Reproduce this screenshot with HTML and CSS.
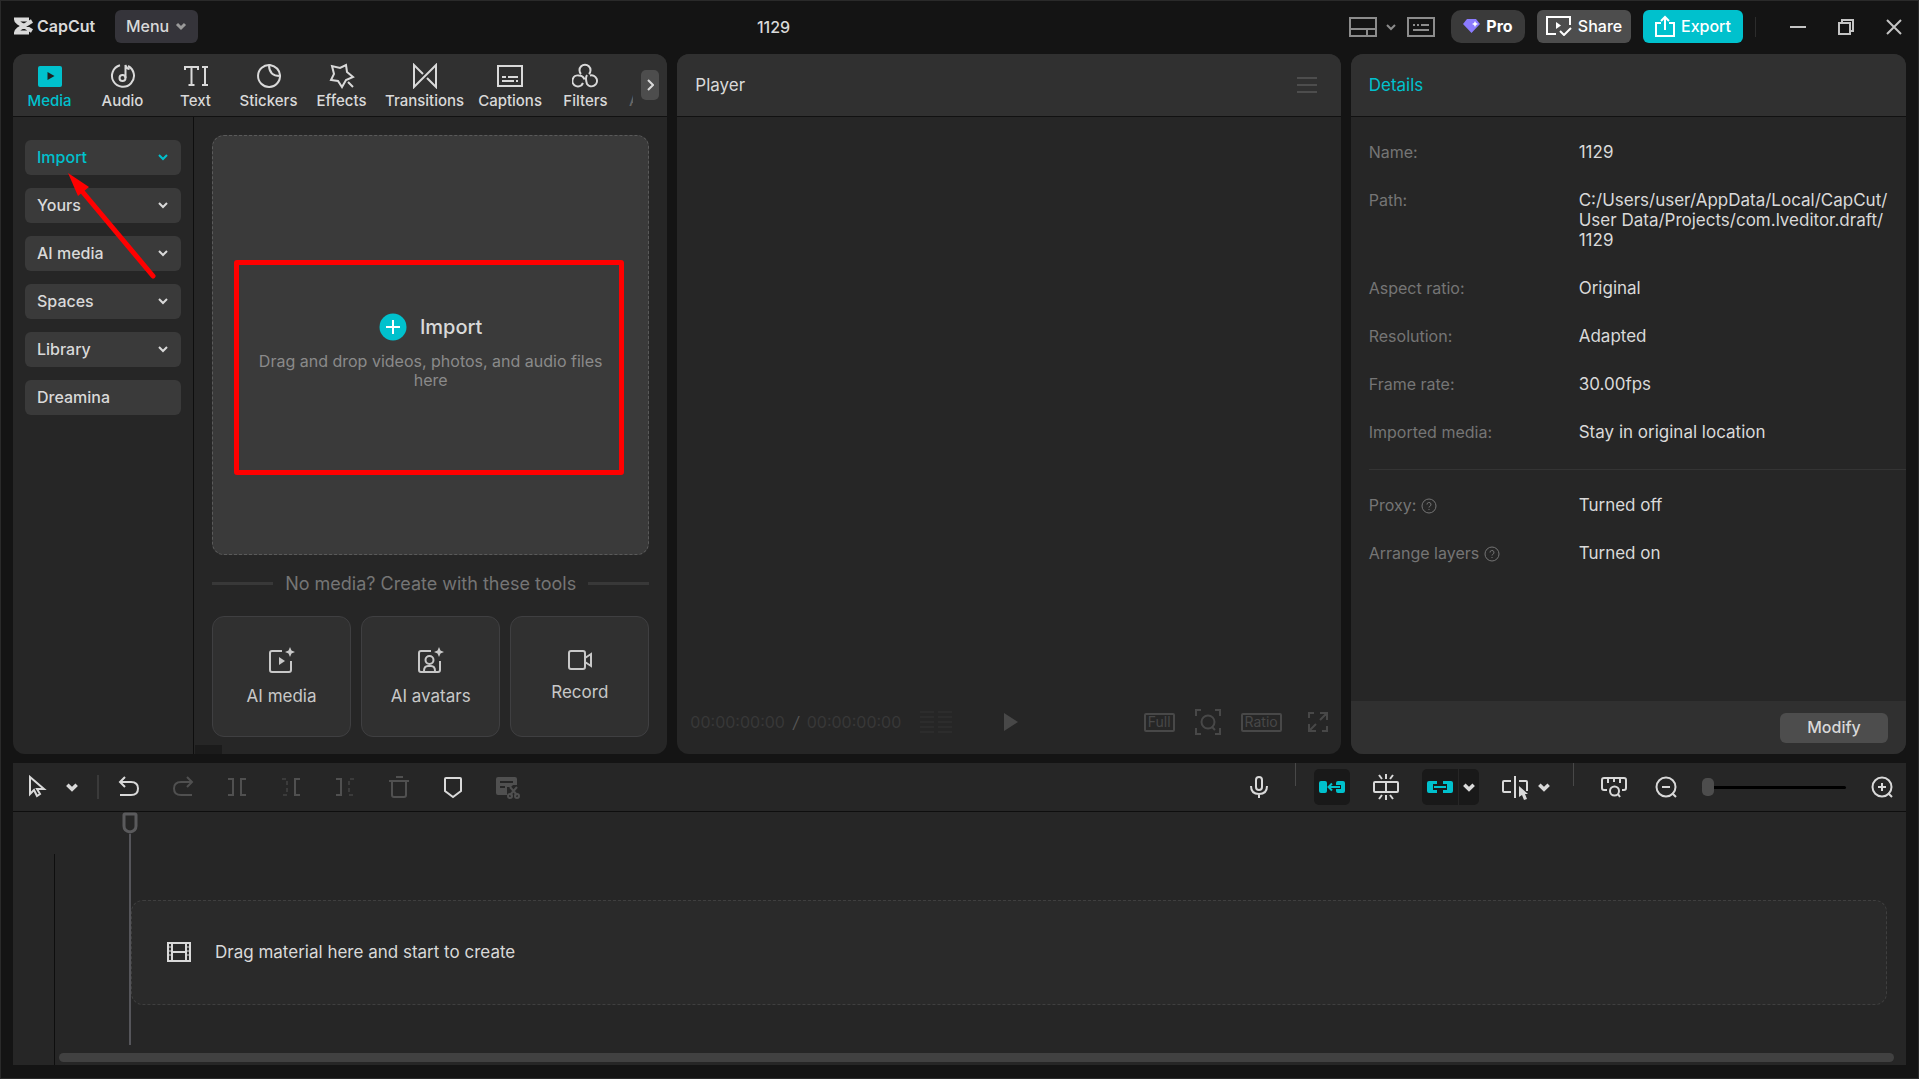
FILE: index.html
```html
<!DOCTYPE html>
<html lang="en">
<head>
  <meta charset="utf-8">
  <title>CapCut - 1129</title>
  <link rel="stylesheet" href="styles.css">
</head>
<body>
  <!-- shared icons -->
  <svg class="defs">
    <symbol id="chevron" viewBox="0 0 12 12"><path d="M2 4l4 4 4-4"/></symbol>
    <symbol id="help" viewBox="0 0 16 16"><circle cx="8" cy="8" r="7"/><path d="M6 6.500a2 2 0 1 1 2.800 1.800q-.8.4-.8 1.200M8 11v1"/></symbol>
  </svg>

  <header class="topbar">
    <div class="brand">
      <svg class="logo" width="20" height="18" viewBox="0 0 20 18"><path d="M19 4L5 12.500Q3 14 3 15.500h11v-2M19 14L5 5.500Q3 4 3 2.500h11v2" /></svg>
      <span>CapCut</span>
    </div>
    <button class="btn menu-btn" type="button">Menu <svg class="icon bold" width="12" height="12"><use href="#chevron"/></svg></button>
    <h1 class="project-title">1129</h1>
    <div class="top-actions">
      <button class="plain layout-btn" type="button" aria-label="Layout">
        <svg class="icon" width="28" height="20" viewBox="0 0 28 20"><path d="M1 1h26v18H1zM1 12h26M18 12v7"/></svg>
        <svg class="icon" width="12" height="12"><use href="#chevron"/></svg>
      </button>
      <button class="plain" type="button" aria-label="Shortcuts">
        <svg class="icon" width="28" height="20" viewBox="0 0 28 20"><path d="M1 1h26v18H1zM6 8h2M10 8h2M14 8h8M6 13h16"/></svg>
      </button>
      <button class="btn pro-btn" type="button">
        <svg width="17" height="14" viewBox="0 0 17 14"><path d="M4 0h9l4 5-8.500 9L0 5z" fill="#8b7bff"/><path d="M12 2l1 2 2 1-2 1-1 2-1-2-2-1 2-1z" fill="#fff"/></svg>
        Pro
      </button>
      <button class="btn share-btn" type="button">
        <svg class="icon" width="26" height="20" viewBox="0 0 26 20"><path d="M10 18H1V1h23v8M14 15l4 4 7-7"/><path class="fill" d="M10 6v7l5-3.500z"/></svg>
        Share
      </button>
      <button class="btn export-btn" type="button">
        <svg class="icon" width="20" height="22" viewBox="0 0 20 22"><path d="M6 8H1v13h18V8h-5M10 15V2M6 6l4-4 4 4"/></svg>
        Export
      </button>
      <div class="window-controls">
        <button class="plain" type="button" aria-label="Minimize"><svg class="icon" width="16" height="16" viewBox="0 0 16 16"><path d="M0 8h16"/></svg></button>
        <button class="plain" type="button" aria-label="Restore"><svg class="icon" width="16" height="16" viewBox="0 0 16 16"><path d="M1 4h11v11H1zM4 4V1h11v11h-3"/></svg></button>
        <button class="plain" type="button" aria-label="Close"><svg class="icon" width="16" height="16" viewBox="0 0 16 16"><path d="M1 1l14 14M15 1L1 15"/></svg></button>
      </div>
    </div>
  </header>

  <main class="workspace">
    <section class="panel media-panel">
      <div class="panel-head tabs-head">
        <nav class="tabs">
          <a class="tab active" href="#media"><svg width="26" height="26" viewBox="0 0 26 26"><path d="M1 5q0-2 2-2h20q2 0 2 2v17q0 2-2 2H3q-2 0-2-2z" fill="#00c1cd"/><path d="M10.500 9v8l7-4z" fill="#202020"/></svg>Media</a>
          <a class="tab" href="#audio"><svg class="icon" width="26" height="26" viewBox="0 0 26 26"><path d="M10 2.200A11 11 0 1 0 18 3M15.500 15V2q1 4 4 4"/><circle cx="12.500" cy="15" r="3"/></svg>Audio</a>
          <a class="tab" href="#text"><svg class="icon" width="26" height="26" viewBox="0 0 26 26"><path d="M2 7V4h13v3M8.500 4v18M5.500 22h6M19 4h6M19 22h6M22 4v18"/></svg>Text</a>
          <a class="tab" href="#stickers"><svg class="icon" width="26" height="26" viewBox="0 0 26 26"><path d="M14 2A11 11 0 1 0 24 12Q23 4 14 2zM13 2q0 11 11 11"/></svg>Stickers</a>
          <a class="tab" href="#effects"><svg class="icon" width="26" height="26" viewBox="0 0 26 26"><path d="M17 2l1 7 6 5-7 3-4 7-4-6-7-1 3-6-2-8 8 2zM19 19l5 5"/></svg>Effects</a>
          <a class="tab" href="#transitions"><svg class="icon" width="26" height="26" viewBox="0 0 26 26"><path d="M11 11L2 2v22L24 2v22l-9-9"/></svg>Transitions</a>
          <a class="tab" href="#captions"><svg class="icon" width="26" height="26" viewBox="0 0 26 26"><path d="M1 3h24v20H1zM5 14h4M11 14h10M5 18h12M19 18h2"/></svg>Captions</a>
          <a class="tab" href="#filters"><svg class="icon" width="26" height="26" viewBox="0 0 26 26"><path d="M9 11a5.500 5.500 0 1 1 8 0M11 20a5.500 5.500 0 1 1-4-7.500q4 0 5.500 4M15 12q-2 3 0 9a5.500 5.500 0 1 0 3-8.500"/></svg>Filters</a>
          <a class="tab faded" href="#adjustment"><svg width="26" height="26"></svg>Adjustment</a>
        </nav>
        <button class="tabs-next" type="button" aria-label="More tabs"><svg class="icon" width="8" height="12" viewBox="0 0 8 12"><path d="M2 1l5 5-5 5"/></svg></button>
      </div>

      <div class="media-body">
        <div class="side-menu">
          <button class="side-item active" type="button">Import <svg class="icon" width="12" height="12"><use href="#chevron"/></svg></button>
          <button class="side-item" type="button">Yours <svg class="icon" width="12" height="12"><use href="#chevron"/></svg></button>
          <button class="side-item" type="button">AI media <svg class="icon" width="12" height="12"><use href="#chevron"/></svg></button>
          <button class="side-item" type="button">Spaces <svg class="icon" width="12" height="12"><use href="#chevron"/></svg></button>
          <button class="side-item" type="button">Library <svg class="icon" width="12" height="12"><use href="#chevron"/></svg></button>
          <button class="side-item" type="button">Dreamina</button>
          <!-- arrow lies over the menu -->
          <svg class="pointer" width="92" height="110" viewBox="0 0 92 110"><path d="M14 17L86 103" stroke="#f00" stroke-width="5" stroke-linecap="round"/><path d="M1 0l21 14-11 9z" fill="#f00"/></svg>
        </div>

        <div class="media-content">
          <div class="drop-area">
            <button class="import-btn" type="button">
              <svg width="28" height="28" viewBox="0 0 28 28"><circle cx="14" cy="14" r="13.500" fill="#00c1cd"/><path d="M7 14h14M14 7v14" stroke="#fff" stroke-width="2"/></svg>
              Import
            </button>
            <p>Drag and drop videos, photos, and audio files here</p>
            <div class="highlight"></div>
          </div>
          <div class="tools-title"><span>No media? Create with these tools</span></div>
          <div class="tools">
            <button class="tool-card" type="button">
              <svg class="icon" width="28" height="28" viewBox="0 0 28 28"><path d="M14 5H4q-2 0-2 2v17q0 2 2 2h17q2 0 2-2V15"/><path class="fill" d="M11 11v8l6-4zM22 1l1.500 3.500L27 6l-3.500 1.500L22 11l-1.500-3.500L17 6l3.500-1.500z"/></svg>
              AI media
            </button>
            <button class="tool-card" type="button">
              <svg class="icon" width="28" height="28" viewBox="0 0 28 28"><path d="M14 5H4q-2 0-2 2v17q0 2 2 2h17q2 0 2-2V15M7 25q0-5 4-5h3q4 0 4 5"/><circle cx="12.500" cy="14" r="4"/><path class="fill" d="M22 1l1.500 3.500L27 6l-3.500 1.500L22 11l-1.500-3.500L17 6l3.500-1.500z"/></svg>
              AI avatars
            </button>
            <button class="tool-card" type="button">
              <svg class="icon" width="26" height="20" viewBox="0 0 26 20"><path d="M4 1h12q2 0 2 2v14q0 2-2 2H4q-2 0-2-2V3q0-2 2-2zM18 8l6-4v12l-6-4"/></svg>
              Record
            </button>
          </div>
          <div class="scroll-corner"></div>
        </div>
      </div>
    </section>

    <section class="panel player-panel">
      <div class="panel-head">
        <h2>Player</h2>
        <button class="plain player-menu" type="button" aria-label="Player menu"><svg class="icon" width="20" height="16" viewBox="0 0 20 16"><path d="M0 1h20M0 8h20M0 15h20"/></svg></button>
      </div>
      <div class="player-view"></div>
      <div class="player-controls">
        <div class="timecode"><span>00:00:00:00</span><i>/</i><span>00:00:00:00</span></div>
        <svg class="icon levels" width="34" height="24" viewBox="0 0 34 24"><path d="M1 2h14M1 7h14M1 12h14M1 17h14M1 22h14M19 2h14M19 7h14M19 12h14M19 17h14M19 22h14"/></svg>
        <button class="plain play-btn" type="button" aria-label="Play"><svg width="16" height="18" viewBox="0 0 16 18"><path d="M1 0v18l14-9z" fill="currentColor"/></svg></button>
        <div class="view-tools">
          <button class="boxed" type="button">Full</button>
          <button class="plain" type="button" aria-label="Zoom"><svg class="icon" width="26" height="26" viewBox="0 0 26 26"><path d="M1 7V1h5M20 1h5v6M25 19v6h-5M6 25H1v-6M17 18l3 3"/><circle cx="13" cy="13" r="6.500"/></svg></button>
          <button class="boxed" type="button">Ratio</button>
          <button class="plain" type="button" aria-label="Full screen"><svg class="icon" width="20" height="20" viewBox="0 0 20 20"><path d="M1 6V1h5M19 14v5h-5M12 1h7v7M19 1l-7 7M8 19H1v-7M1 19l7-7"/></svg></button>
        </div>
      </div>
    </section>

    <section class="panel details-panel">
      <div class="panel-head"><h2 class="accent">Details</h2></div>
      <dl class="details">
        <div><dt>Name:</dt><dd>1129</dd></div>
        <div><dt>Path:</dt><dd>C:/Users/user/AppData/Local/CapCut/<wbr>User Data/Projects/com.lveditor.draft/<wbr>1129</dd></div>
        <div><dt>Aspect ratio:</dt><dd>Original</dd></div>
        <div><dt>Resolution:</dt><dd>Adapted</dd></div>
        <div><dt>Frame rate:</dt><dd>30.00fps</dd></div>
        <div><dt>Imported media:</dt><dd>Stay in original location</dd></div>
      </dl>
      <dl class="details more">
        <div><dt>Proxy: <svg class="icon" width="16" height="16"><use href="#help"/></svg></dt><dd>Turned off</dd></div>
        <div><dt>Arrange layers <svg class="icon" width="16" height="16"><use href="#help"/></svg></dt><dd>Turned on</dd></div>
      </dl>
      <div class="details-foot"><button class="btn modify-btn" type="button">Modify</button></div>
    </section>
  </main>

  <section class="timeline">
    <div class="toolbar">
      <div class="tool-group select-group">
        <button class="plain" type="button" aria-label="Select"><svg class="icon" width="20" height="24" viewBox="0 0 20 24"><path d="M3 2v17l4-4 3 6 3-2-3-5h7z"/></svg></button>
        <button class="plain" type="button" aria-label="Select options"><svg class="icon bold" width="14" height="14"><use href="#chevron"/></svg></button>
      </div>
      <div class="tool-group edit-group">
        <button class="plain" type="button" aria-label="Undo"><svg class="icon" width="24" height="24" viewBox="0 0 24 24"><path d="M8 2L3 7l5 5M4 7h10q7 0 7 6.500T14 20H3"/></svg></button>
        <button class="plain dim" type="button" aria-label="Redo"><svg class="icon" width="24" height="24" viewBox="0 0 24 24"><path d="M16 2l5 5-5 5M20 7H10q-7 0-7 6.500T10 20h11"/></svg></button>
        <button class="plain dim" type="button" aria-label="Split"><svg class="icon" width="24" height="24" viewBox="0 0 24 24"><path d="M3 4h5v16H3M21 4h-5v16h5"/></svg></button>
        <button class="plain dim" type="button" aria-label="Delete left"><svg class="icon" width="24" height="24" viewBox="0 0 24 24"><path class="ghost" d="M3 4h5v16H3" stroke-dasharray="4 3"/><path d="M21 4h-5v16h5"/></svg></button>
        <button class="plain dim" type="button" aria-label="Delete right"><svg class="icon" width="24" height="24" viewBox="0 0 24 24"><path d="M3 4h5v16H3"/><path class="ghost" d="M21 4h-5v16h5" stroke-dasharray="4 3"/></svg></button>
        <button class="plain dim" type="button" aria-label="Delete"><svg class="icon" width="24" height="24" viewBox="0 0 24 24"><path d="M2 6h20M9 2h7M5 6v14q0 2 2 2h10q2 0 2-2V6"/></svg></button>
        <button class="plain" type="button" aria-label="Marker"><svg class="icon" width="24" height="24" viewBox="0 0 24 24"><path d="M4 4q0-1 1-1h14q1 0 1 1v12l-8 6-8-6z"/></svg></button>
        <button class="plain dim" type="button" aria-label="Auto cut"><svg class="icon" width="26" height="24" viewBox="0 0 26 24"><path class="fill" fill-rule="evenodd" d="M3 2h17q2 0 2 2v6h-4l-2 2h-4v8H3q-2 0-2-2V4q0-2 2-2zM5 6v2h13V6zM5 11v2h5v-2z"/><path d="M15 12l7 8M22 12l-7 8"/><circle cx="15" cy="21" r="2"/><circle cx="22" cy="21" r="2"/></svg></button>
      </div>
      <div class="tool-group right-group">
        <button class="plain mic-btn" type="button" aria-label="Record audio"><svg class="icon" width="20" height="24" viewBox="0 0 20 24"><rect x="7" y="2" width="6" height="13" rx="3"/><path d="M2 11q0 8 8 8t8-8M10 19v4"/></svg></button>
        <div class="snap-group">
          <button class="plain toggle" type="button" aria-label="Main track magnet"><svg width="28" height="16" viewBox="0 0 28 16"><path d="M3 2h4q2 0 2 2v8q0 2-2 2H3q-2 0-2-2V4q0-2 2-2zM20 2h5q2 0 2 2v8q0 2-2 2h-5q-2 0-2-2v-2h5V6h-5V4q0-2 2-2z" fill="#00c1cd"/><path d="M11 8h11M14 4.500L10.500 8l3.500 3.500" fill="none" stroke="#00c1cd" stroke-width="2"/></svg></button>
          <button class="plain" type="button" aria-label="Auto snapping"><svg class="icon" width="28" height="26" viewBox="0 0 28 26"><path d="M3 8h22q1 0 1 1v8q0 1-1 1H3q-1 0-1-1V9q0-1 1-1zM14 8v10M14 0v5M7 1l3 4M21 1l-3 4M14 21v5M7 25l3-4M21 25l-3-4"/></svg></button>
          <div class="link-toggle">
            <button class="plain" type="button" aria-label="Linkage"><svg width="28" height="16" viewBox="0 0 28 16"><path d="M3 2h8v3H7v6h4v3H3q-2 0-2-2V4q0-2 2-2zM17 2h8q2 0 2 2v8q0 2-2 2h-8v-3h4V5h-4zM8 7h12v2H8z" fill="#00c1cd"/></svg></button>
            <button class="plain" type="button" aria-label="Linkage options"><svg class="icon bold" width="14" height="14"><use href="#chevron"/></svg></button>
          </div>
          <button class="plain axis-btn" type="button" aria-label="Preview axis"><svg class="icon" width="28" height="26" viewBox="0 0 28 26"><path d="M10 7H3q-1 0-1 1v9q0 1 1 1h7M14 2v22M18 7h7q1 0 1 1v9"/><path class="fill" d="M18 12v11l3-2 2 5 3-1-2-5h3z"/></svg><svg class="icon bold" width="14" height="14"><use href="#chevron"/></svg></button>
        </div>
        <div class="zoom-group">
          <button class="plain" type="button" aria-label="Fit timeline"><svg class="icon" width="28" height="24" viewBox="0 0 28 24"><path d="M7 15H4q-2 0-2-2V5q0-2 2-2h20q2 0 2 2v8q0 2-2 2h-2M8 3v5M14 3v4M20 3v5M18 19l2 3"/><circle cx="14.500" cy="16" r="4.500"/></svg></button>
          <button class="plain" type="button" aria-label="Zoom out"><svg class="icon" width="24" height="24" viewBox="0 0 24 24"><circle cx="12" cy="12" r="9.500"/><path d="M8 12h8M18 18l4 4"/></svg></button>
          <input class="zoom-slider" type="range" min="0" max="100" value="0" aria-label="Timeline zoom">
          <button class="plain" type="button" aria-label="Zoom in"><svg class="icon" width="24" height="24" viewBox="0 0 24 24"><circle cx="12" cy="12" r="9.500"/><path d="M8 12h8M12 8v8M18 18l4 4"/></svg></button>
        </div>
      </div>
    </div>
    <div class="tracks">
      <div class="track-heads"></div>
      <div class="track-area">
        <div class="track-drop">
          <svg class="icon" width="24" height="20" viewBox="0 0 24 20"><path d="M1 1h22v18H1zM5 1v18M19 1v18M5 10h14"/><path d="M1 5h4M1 9h4M1 13h4M19 5h4M19 9h4M19 13h4" stroke-width="1"/></svg>
          Drag material here and start to create
        </div>
        <div class="playhead"><svg width="16" height="22" viewBox="0 0 16 22"><path d="M2 3q0-1 1-1h10q1 0 1 1v11q0 5-6 6-6-1-6-6z" fill="#262626" stroke="#5a5a5c" stroke-width="3"/></svg></div>
        <div class="track-scroll"></div>
      </div>
    </div>
  </section>
</body>
</html>
```
FILE: styles.css
```css
* {
  box-sizing: border-box;
}
body {
  margin: 0;
  min-height: 100vh;
  padding: 0 12px 13px;
  display: flex;
  flex-direction: column;
  background-color: #141414;
  border: 1px solid #2a2a2a; /* window frame */
  color: #d9d9d9;
  font-family: Inter, "Liberation Sans", sans-serif;
  font-size: 17px;
}
h1, h2, p, dl, dd {
  margin: 0;
}
button {
  font: inherit;
  color: inherit;
  border: none;
  cursor: pointer;
}
.defs {
  display: none;
}
.icon {
  fill: none;
  stroke: currentColor;
  stroke-width: 2;
  flex-shrink: 0;
}
.icon .fill {
  fill: currentColor;
  stroke: none;
}
.icon .ghost {
  opacity: 0.5;
}
.plain {
  display: flex;
  align-items: center;
  justify-content: center;
  padding: 0;
  background: none;
}

/* Top bar */
.topbar {
  display: flex;
  align-items: center;
  height: 53px;
  padding-bottom: 2px;
}
.brand {
  display: flex;
  align-items: center;
  gap: 4px;
  width: 102px;
  padding-bottom: 2px;
  font-size: 16px;
  font-weight: 600;
}
.logo {
  fill: none;
  stroke: #d9d9d9;
  stroke-width: 4;
}
.btn {
  display: flex;
  align-items: center;
  justify-content: center;
  gap: 6px;
  height: 33px;
  padding: 0 0 2px;
  border-radius: 6px;
  font-size: 16px;
  font-weight: 500;
}
.menu-btn {
  width: 83px;
  background-color: #35343a;
}
.menu-btn .icon {
  color: #9a9a9a;
}
.project-title {
  flex: 1;
  text-align: center;
  font-size: 16px;
  font-weight: 500;
}
.top-actions {
  display: flex;
  align-items: center;
  gap: 12px;
  color: #8c8c8c;
}
.layout-btn {
  gap: 8px;
  margin-right: -2px;
}
.top-actions .btn {
  color: #fff;
}
.pro-btn {
  width: 74px;
  margin-left: 4px;
  border-radius: 10px;
  background-color: #3a3a3a;
  font-weight: 700;
}
.share-btn {
  width: 94px;
  background-color: #4d4d4d;
}
.export-btn {
  width: 100px;
  background-color: #00c1cd;
}
.window-controls {
  display: flex;
  gap: 32px;
  padding: 2px 4px 2px 34px;
  border-left: 1px solid #2c2c2c;
  color: #c4c4c4;
}

/* Upper panels */
.workspace {
  flex: 1;
  display: grid;
  grid-template-columns: 654fr 663fr 555fr;
  gap: 10px;
  margin-bottom: 9px;
}
.panel {
  display: flex;
  flex-direction: column;
  min-width: 0;
  border-radius: 12px;
  background-color: #262626;
  overflow: hidden;
}
.panel-head {
  display: flex;
  align-items: center;
  justify-content: space-between;
  height: 63px;
  padding: 0 18px;
  background-color: #303030;
  border-bottom: 1px solid #111;
}
.panel-head h2 {
  font-size: 17px;
  font-weight: 400;
}
.panel-head .accent {
  color: #00c1cd;
}

/* Media panel */
.tabs-head {
  padding: 0 8px 0 0;
}
.tabs {
  display: flex;
  flex: 1;
  min-width: 0;
  overflow: hidden;
}
.tab {
  display: flex;
  flex-direction: column;
  flex-shrink: 0;
  align-items: center;
  gap: 3px;
  min-width: 73px;
  padding: 2px 7px 0;
  font-size: 15px;
  font-weight: 500;
  line-height: 18px;
  color: #d9d9d9;
  text-decoration: none;
}
.tab.active,
.side-item.active {
  color: #00c1cd;
}
.tab.faded {
  color: #666;
}
.tabs-next {
  display: flex;
  align-items: center;
  justify-content: center;
  width: 18px;
  height: 30px;
  margin-left: 8px;
  padding: 0;
  border-radius: 5px;
  background-color: #4d4d4d;
}
.media-body {
  flex: 1;
  display: flex;
}
.side-menu {
  position: relative;
  display: flex;
  flex-direction: column;
  gap: 13px;
  width: 181px;
  padding: 23px 12px;
  border-right: 1px solid #0e0e0e;
}
.side-item {
  display: flex;
  align-items: center;
  justify-content: space-between;
  height: 35px;
  padding: 0 12px 2px;
  border-radius: 6px;
  background-color: #3a3a3a;
  font-size: 16px;
  font-weight: 500;
}
.pointer {
  position: absolute;
  left: 54px;
  top: 56px;
}
.media-content {
  position: relative;
  flex: 1;
  display: flex;
  flex-direction: column;
  padding: 18px 18px 17px;
}
.drop-area {
  position: relative;
  flex: 1;
  display: flex;
  flex-direction: column;
  align-items: center;
  justify-content: center;
  padding: 12px 30px 0;
  border: 1px dashed #5a5a5a;
  border-radius: 12px;
  background-color: #3a3a3a;
  text-align: center;
}
.import-btn {
  display: flex;
  align-items: center;
  gap: 13px;
  padding: 0;
  background: none;
  font-size: 20px;
  font-weight: 500;
}
.drop-area p {
  margin-top: 11px;
  color: #8a8a8a;
  font-size: 16px;
  line-height: 19px;
}
.highlight {
  position: absolute;
  top: 124px;
  left: 21px;
  right: 24px;
  height: 215px;
  border: 5px solid #f00;
  border-radius: 3px;
}
.tools-title {
  display: flex;
  align-items: center;
  gap: 12px;
  height: 61px;
  padding-bottom: 4px;
  color: #757575;
  font-size: 18px;
}
.tools-title::before,
.tools-title::after {
  content: "";
  flex: 1;
  height: 3px;
  background-color: #383838;
}
.tools {
  display: grid;
  grid-template-columns: repeat(3, 1fr);
  gap: 10px;
}
.tool-card {
  display: flex;
  flex-direction: column;
  align-items: center;
  justify-content: center;
  gap: 12px;
  height: 121px;
  padding: 0 0 2px;
  border: 1px solid #3f3f41;
  border-radius: 12px;
  background-color: #303030;
  color: #c8c8c8;
}
.scroll-corner {
  position: absolute;
  left: 1px;
  bottom: 0;
  width: 27px;
  height: 9px;
  background-color: #1b1b1b;
}

/* Player panel */
.player-menu {
  margin-right: 6px;
  color: #4d4d4d;
}
.player-view {
  flex: 1;
}
.player-controls {
  display: flex;
  align-items: center;
  height: 64px;
  padding: 0 13px;
  color: #484848;
}
.timecode {
  display: flex;
  gap: 8px;
  color: #383838;
  font-size: 16px;
}
.timecode i {
  color: #555;
}
.levels {
  margin-left: 18px;
  color: #2c2c2c;
}
.play-btn {
  margin-left: 50px;
}
.view-tools {
  display: flex;
  align-items: center;
  gap: 20px;
  margin-left: auto;
}
.boxed {
  height: 19px;
  padding: 0 2px;
  border: 2px solid #484848;
  border-radius: 2px;
  background: none;
  font-size: 14px;
  line-height: 14px;
}
.view-tools .plain:last-child {
  margin-left: 6px;
}

/* Details panel */
.details {
  display: flex;
  flex-direction: column;
  gap: 28px;
  padding: 25px 12px 27px 18px;
}
.details div {
  display: flex;
  align-items: baseline;
  line-height: 20px;
}
.details dt {
  flex: 0 0 210px;
  color: #757575;
  font-size: 16px;
}
.details dt .icon {
  stroke-width: 1;
  vertical-align: -3px;
}
.details.more {
  margin-left: 18px;
  padding-left: 0;
  border-top: 1px solid #343434;
}
.details-foot {
  display: flex;
  justify-content: flex-end;
  align-items: center;
  height: 53px;
  margin-top: auto;
  padding: 0 18px;
  background-color: #303030;
}
.modify-btn {
  width: 108px;
  height: 30px;
  background-color: #4d4d4d;
}

/* Timeline */
.timeline {
  display: flex;
  flex-direction: column;
  height: 302px;
  background-color: #262626;
}
.toolbar {
  display: flex;
  align-items: center;
  height: 49px;
  padding: 0 12px 0 14px;
  border-bottom: 1px solid #0e0e0e;
}
.tool-group,
.snap-group,
.zoom-group {
  display: flex;
  align-items: center;
}
.bold {
  stroke-width: 3;
}
.dim {
  color: #505050;
}
.select-group {
  gap: 18px;
  padding-right: 18px;
  border-right: 2px solid #3a3a3a;
}
.edit-group {
  gap: 30px;
  margin-left: 18px;
}
.right-group {
  flex: 1;
  justify-content: flex-end;
  align-self: stretch;
}
.mic-btn {
  margin-right: 26px;
}
.snap-group {
  gap: 22px;
  padding-right: 22px;
}
.snap-group::before,
.zoom-group::before {
  content: "";
  align-self: flex-start;
  width: 1px;
  height: 23px;
  background-color: #484848;
}
.snap-group::before {
  margin-right: -4px;
}
.snap-group,
.zoom-group {
  align-self: stretch;
}
.toggle,
.link-toggle {
  height: 36px;
  border-radius: 5px;
  background-color: #191919;
}
.toggle {
  width: 36px;
}
.link-toggle {
  display: flex;
}
.link-toggle .plain {
  width: 36px;
}
.link-toggle .plain + .plain {
  width: 21px;
  border-left: 1px solid #262626;
}
.axis-btn {
  gap: 8px;
}
.zoom-group {
  gap: 26px;
}
.zoom-slider {
  width: 144px;
  height: 20px;
  margin: 0 -2px;
  appearance: none;
  background: none;
}
.zoom-slider::-webkit-slider-runnable-track {
  height: 3px;
  border-radius: 2px;
  background-color: #000;
}
.zoom-slider::-webkit-slider-thumb {
  appearance: none;
  width: 12px;
  height: 18px;
  margin-top: -8px;
  border-radius: 5px;
  background-color: #4d4d4d;
}
.tracks {
  flex: 1;
  display: flex;
}
.track-heads {
  width: 42px;
  margin-top: 42px;
  border-right: 1px solid #0e0e0e;
}
.track-area {
  position: relative;
  flex: 1;
  padding: 88px 19px 0 76px;
}
.track-drop {
  display: flex;
  align-items: center;
  gap: 24px;
  height: 105px;
  padding: 0 0 2px 35px;
  border: 1px dashed #3f3f3f;
  border-radius: 12px;
  background-color: #2a2a2a;
}
.playhead {
  position: absolute;
  top: 0;
  left: 67px;
  display: flex;
  flex-direction: column;
  align-items: center;
}
.playhead::after {
  content: "";
  width: 2px;
  height: 211px;
  background-color: #55555a;
}
.track-scroll {
  position: absolute;
  left: 4px;
  right: 12px;
  bottom: 3px;
  height: 9px;
  border-radius: 5px;
  background-color: #414141;
}
```
